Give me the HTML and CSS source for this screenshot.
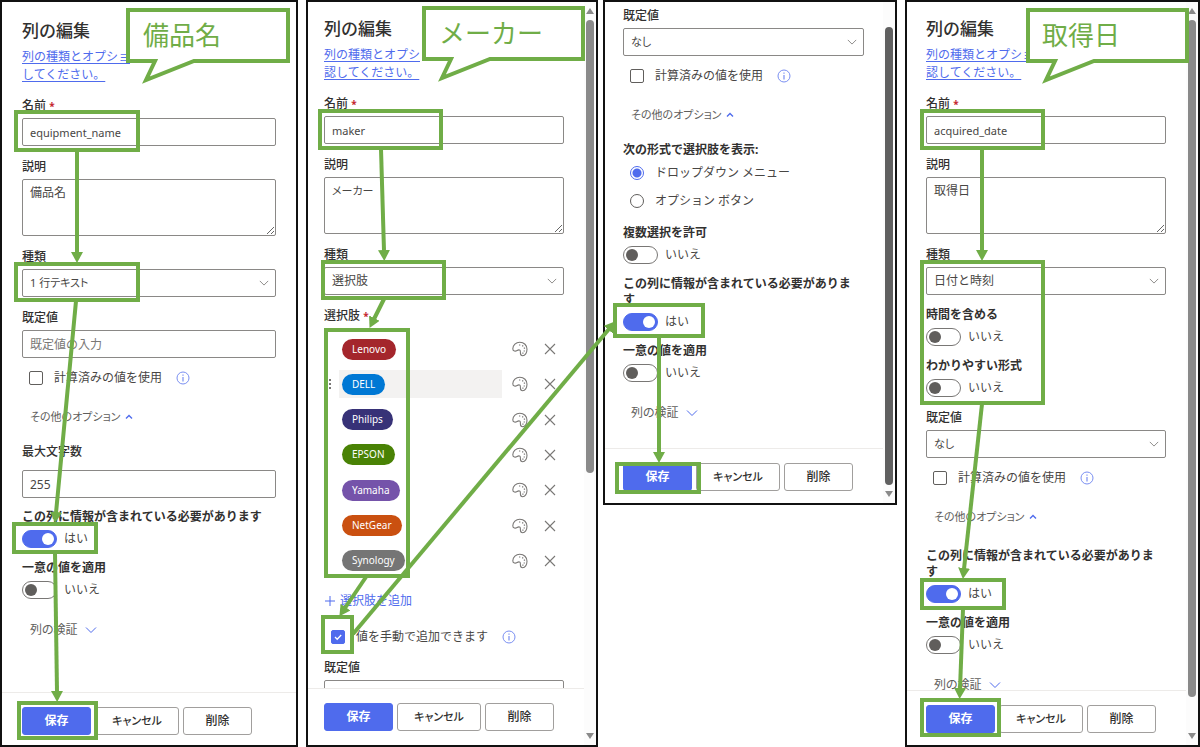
FILE: index.html
```
<!DOCTYPE html>
<html lang="ja">
<head>
<meta charset="utf-8">
<title>列の編集</title>
<link rel="stylesheet" href="styles.css">
</head>
<body>
<svg class="defs" aria-hidden="true">
  <symbol id="down" viewBox="0 0 12 12"><path d="M1 3.5 6 8.500l5-5" fill="none" stroke="currentColor"/></symbol>
  <symbol id="up" viewBox="0 0 12 12"><path d="M3 7.500 6 4.500l3 3" fill="none" stroke="currentColor" stroke-width="1.4"/></symbol>
  <symbol id="info" viewBox="0 0 14 14"><circle cx="7" cy="7" r="6" fill="none" stroke="currentColor"/><path d="M7 6v4.500M7 3.500v1.300" stroke="currentColor" stroke-width="1.200"/></symbol>
  <symbol id="close" viewBox="0 0 12 12"><path d="m1 1 10 10M11 1 1 11" stroke="currentColor" stroke-width="1.100"/></symbol>
  <symbol id="plus" viewBox="0 0 12 12"><path d="M6 1v10M1 6h10" stroke="currentColor"/></symbol>
  <symbol id="dots" viewBox="0 0 4 12"><path d="M1 1h2v2H1zM1 5h2v2H1zM1 9h2v2H1z" fill="currentColor"/></symbol>
  <symbol id="palette" viewBox="0 0 16 16"><path d="M.8 7.800C.8 4 4 1.200 7.800 1.200c4.200 0 7.200 3.100 7.200 7 0 3.700-2 6.600-4.300 6.600-1.700 0-2.300-1.200-2.300-2.700 0-1.200.2-2.200-.5-2.900-.8-.7-1.900-.3-2.800.3-1.400.9-4.300 1.200-4.300-1.700Z" fill="none" stroke="currentColor" stroke-width="1.100"/><path d="M7 4h1.300M10 4.800h1.300M11.800 7.200h1.300M11.600 10h1.300M10.300 12.200h1.200" stroke="currentColor" stroke-width="1.200"/></symbol>
</svg>

<main class="board">

<section class="panel panel-name">
  <form class="content">
    <h2>列の編集</h2>
    <a class="help" href="#">列の種類とオプショ<br>してください。</a>
    <div class="field"><label for="n1">名前 <b class="req">*</b></label><input class="box narrow" id="n1" type="text" value="equipment_name"></div>
    <div class="field"><label for="d1">説明</label><textarea class="box" id="d1">備品名</textarea></div>
    <div class="field"><label for="t1">種類</label><div class="pick"><select class="box narrow" id="t1"><option>1 行テキスト</option></select><svg><use href="#down"/></svg></div></div>
    <div class="field"><label for="v1">既定値</label><input class="box" id="v1" type="text" placeholder="既定値の入力"></div>
    <div class="check"><input type="checkbox" id="c1"><label for="c1">計算済みの値を使用</label><svg class="info"><use href="#info"/></svg></div>
    <button type="button" class="expander more narrow">その他のオプション<svg><use href="#up"/></svg></button>
    <div class="field limit"><label for="m1">最大文字数</label><input class="box" id="m1" type="text" value="255"></div>
    <div class="switch"><span class="title">この列に情報が含まれている必要があります</span><label><input type="checkbox" role="switch" checked>はい</label></div>
    <div class="switch"><span class="title">一意の値を適用</span><label><input type="checkbox" role="switch">いいえ</label></div>
    <button type="button" class="expander verify">列の検証<svg><use href="#down"/></svg></button>
  </form>
  <footer><button class="save">保存</button><button class="cancel narrow">キャンセル</button><button>削除</button></footer>
</section>

<section class="panel panel-maker">
  <form class="content">
    <h2>列の編集</h2>
    <a class="help" href="#">列の種類とオプシ<br>認してください。</a>
    <div class="field"><label for="n2">名前 <b class="req">*</b></label><input class="box narrow" id="n2" type="text" value="maker"></div>
    <div class="field"><label for="d2">説明</label><textarea class="box narrow" id="d2">メーカー</textarea></div>
    <div class="field"><label for="t2">種類</label><div class="pick"><select class="box" id="t2"><option>選択肢</option></select><svg><use href="#down"/></svg></div></div>
    <div class="field"><span class="title">選択肢 <b class="req">*</b></span></div>
    <ul class="choices">
      <li><span class="slot"><span class="chip red">Lenovo</span></span><button type="button" aria-label="色"><svg class="palette"><use href="#palette"/></svg></button><button type="button" aria-label="削除"><svg><use href="#close"/></svg></button></li>
      <li class="active"><svg class="grip"><use href="#dots"/></svg><span class="slot"><span class="chip blue">DELL</span></span><button type="button" aria-label="色"><svg class="palette"><use href="#palette"/></svg></button><button type="button" aria-label="削除"><svg><use href="#close"/></svg></button></li>
      <li><span class="slot"><span class="chip navy">Philips</span></span><button type="button" aria-label="色"><svg class="palette"><use href="#palette"/></svg></button><button type="button" aria-label="削除"><svg><use href="#close"/></svg></button></li>
      <li><span class="slot"><span class="chip green">EPSON</span></span><button type="button" aria-label="色"><svg class="palette"><use href="#palette"/></svg></button><button type="button" aria-label="削除"><svg><use href="#close"/></svg></button></li>
      <li><span class="slot"><span class="chip purple">Yamaha</span></span><button type="button" aria-label="色"><svg class="palette"><use href="#palette"/></svg></button><button type="button" aria-label="削除"><svg><use href="#close"/></svg></button></li>
      <li><span class="slot"><span class="chip orange">NetGear</span></span><button type="button" aria-label="色"><svg class="palette"><use href="#palette"/></svg></button><button type="button" aria-label="削除"><svg><use href="#close"/></svg></button></li>
      <li><span class="slot"><span class="chip gray">Synology</span></span><button type="button" aria-label="色"><svg class="palette"><use href="#palette"/></svg></button><button type="button" aria-label="削除"><svg><use href="#close"/></svg></button></li>
    </ul>
    <button type="button" class="add"><svg><use href="#plus"/></svg>選択肢を追加</button>
    <div class="check manual"><input type="checkbox" id="c2" checked><label for="c2">値を手動で追加できます</label><svg class="info"><use href="#info"/></svg></div>
    <div class="field"><label for="v2">既定値</label><div class="pick"><select class="box narrow" id="v2"><option>なし</option></select><svg><use href="#down"/></svg></div></div>
  </form>
  <footer><button class="save">保存</button><button class="cancel narrow">キャンセル</button><button>削除</button></footer>
  <div class="scroll" aria-hidden="true"><i class="arrow-up"></i><i class="thumb"></i><i class="rest"></i><i class="arrow-down"></i></div>
</section>

<section class="panel panel-more">
  <form class="content">
    <div class="field"><label for="v3">既定値</label><div class="pick"><select class="box narrow" id="v3"><option>なし</option></select><svg><use href="#down"/></svg></div></div>
    <div class="check"><input type="checkbox" id="c3"><label for="c3">計算済みの値を使用</label><svg class="info"><use href="#info"/></svg></div>
    <button type="button" class="expander more narrow">その他のオプション<svg><use href="#up"/></svg></button>
    <fieldset>
      <legend>次の形式で選択肢を表示:</legend>
      <div class="radio"><input type="radio" name="view" id="r1" checked><label for="r1">ドロップダウン メニュー</label></div>
      <div class="radio"><input type="radio" name="view" id="r2"><label for="r2">オプション ボタン</label></div>
    </fieldset>
    <div class="switch"><span class="title">複数選択を許可</span><label><input type="checkbox" role="switch">いいえ</label></div>
    <div class="switch"><span class="title">この列に情報が含まれている必要があります</span><label><input type="checkbox" role="switch" checked>はい</label></div>
    <div class="switch"><span class="title">一意の値を適用</span><label><input type="checkbox" role="switch">いいえ</label></div>
    <button type="button" class="expander verify">列の検証<svg><use href="#down"/></svg></button>
  </form>
  <footer><button class="save">保存</button><button class="cancel narrow">キャンセル</button><button>削除</button></footer>
  <div class="scroll" aria-hidden="true"><i class="thumb"></i><i class="arrow-down"></i></div>
</section>

<section class="panel panel-date">
  <form class="content">
    <h2>列の編集</h2>
    <a class="help" href="#">列の種類とオプショ<br>認してください。</a>
    <div class="field"><label for="n4">名前 <b class="req">*</b></label><input class="box narrow" id="n4" type="text" value="acquired_date"></div>
    <div class="field"><label for="d4">説明</label><textarea class="box" id="d4">取得日</textarea></div>
    <div class="field"><label for="t4">種類</label><div class="pick"><select class="box" id="t4"><option>日付と時刻</option></select><svg><use href="#down"/></svg></div></div>
    <div class="switch"><span class="title">時間を含める</span><label><input type="checkbox" role="switch">いいえ</label></div>
    <div class="switch"><span class="title">わかりやすい形式</span><label><input type="checkbox" role="switch">いいえ</label></div>
    <div class="field"><label for="v4">既定値</label><div class="pick"><select class="box narrow" id="v4"><option>なし</option></select><svg><use href="#down"/></svg></div></div>
    <div class="check"><input type="checkbox" id="c4"><label for="c4">計算済みの値を使用</label><svg class="info"><use href="#info"/></svg></div>
    <button type="button" class="expander more narrow">その他のオプション<svg><use href="#up"/></svg></button>
    <div class="switch required"><span class="title">この列に情報が含まれている必要があります</span><label><input type="checkbox" role="switch" checked>はい</label></div>
    <div class="switch"><span class="title">一意の値を適用</span><label><input type="checkbox" role="switch">いいえ</label></div>
    <button type="button" class="expander verify">列の検証<svg><use href="#down"/></svg></button>
  </form>
  <footer><button class="save">保存</button><button class="cancel narrow">キャンセル</button><button>削除</button></footer>
  <div class="scroll" aria-hidden="true"><i class="arrow-up"></i><i class="thumb"></i><i class="rest"></i><i class="arrow-down"></i></div>
</section>

<svg class="notes" viewBox="0 0 1200 747" preserveAspectRatio="none">
  <defs>
    <marker id="head" markerUnits="userSpaceOnUse" markerWidth="12" markerHeight="12" refX="1" refY="6" orient="auto"><path d="M0 0 11 6 0 12z" fill="#70ad47"/></marker>
  </defs>
  <g class="frames">
    <rect x="16" y="112" width="122" height="38"/>
    <rect x="16" y="264" width="122" height="36"/>
    <rect x="14" y="524" width="82" height="28"/>
    <rect x="19" y="703" width="77" height="35"/>
    <rect x="320" y="111" width="121" height="37"/>
    <rect x="323" y="262" width="121" height="36"/>
    <rect x="326" y="330" width="82" height="246"/>
    <rect x="323" y="617" width="29" height="35"/>
    <rect x="615" y="305" width="88" height="31"/>
    <rect x="617" y="464" width="82" height="28"/>
    <rect x="922" y="111" width="121" height="37"/>
    <rect x="922" y="262" width="121" height="141"/>
    <rect x="922" y="580" width="82" height="28"/>
    <rect x="922" y="700" width="77" height="35"/>
  </g>
  <g class="arrows">
    <path d="M77 151V253"/>
    <path d="M76 301 56 513"/>
    <path d="M55 553 57 692"/>
    <path d="M381 149 384 251"/>
    <path d="M384 299 374 319"/>
    <path d="M366 577 345 608"/>
    <path d="M353 634 609 329"/>
    <path d="M659 337V453"/>
    <path d="M982 149V251"/>
    <path d="M982 404 964 569"/>
    <path d="M963 609 960 689"/>
  </g>
  <g class="callouts">
    <path d="M128 10H288V61H194L146 80 155 61H128Z"/>
    <path d="M424 8H583V59H490L442 78 451 59H424Z"/>
    <path d="M1028 10H1187V61H1094L1046 80 1055 61H1028Z"/>
    <text x="143" y="45">備品名</text>
    <text x="439" y="43">メーカー</text>
    <text x="1042" y="45">取得日</text>
  </g>
</svg>
</main>
</body>
</html>
```
FILE: styles.css
```
* { box-sizing: border-box; }
body {
  margin: 0;
  background: #fff;
  color: #484644;
  font: 12px/16px "Noto Sans", "Noto Sans CJK JP", sans-serif;
}
button, input, select, textarea { font: inherit; color: inherit; margin: 0; }
button { background: none; border: 0; padding: 0; }
.defs { display: none; }
.board {
  position: relative;
  display: grid;
  grid-template-columns: 298fr 8px 292fr 5px 294fr 8px 295fr;
  height: 100vh;
  overflow: hidden;
}

/* Panels */
.panel {
  --left: 20px;
  --right: 20px;
  --bottom: 12px;
  display: grid;
  grid-template-rows: minmax(0, 1fr) auto;
  position: relative;
  grid-row: 1;
  min-width: 0;
  min-height: 0;
  border: 2px solid #111;
}
.panel-name { grid-column: 1; --bottom: 10px; }
.panel-maker { grid-column: 3; --left: 16px; --right: 32px; --bottom: 14px; }
.panel-more { grid-column: 5; --left: 18px; --right: 31px; align-self: start; }
.panel-date { grid-column: 7; --left: 19px; --right: 32px; }
.content {
  display: flex;
  flex-direction: column;
  overflow: hidden;
  padding: 17px var(--right) 0 var(--left);
}
.content > * { flex: none; }
.panel-name .content { padding-top: 19px; }
.panel-more .content { padding: 6px var(--right) 27px var(--left); }
h2 { margin: 0; font-size: 17px; line-height: 20px; font-weight: 500; color: #323130; }
.help { align-self: flex-start; margin-top: 7px; line-height: 18px; color: #4f6bed; text-underline-offset: 2px; }

/* Fields */
.field { margin-top: 13px; }
.help + .field { margin-top: 14px; }
.panel-more .field:first-child { margin-top: 0; }
.field > label, .title, legend {
  display: block;
  font-weight: 500;
  color: #323130;
}
.switch .title, legend { font-weight: 700; }
.panel-more .title, .panel-date .title { padding-right: 8px; }
.field > label { margin-bottom: 4px; }
.req { color: #c4262e; font-size: 10px; }
.box {
  display: block;
  width: 100%;
  height: 28px;
  padding: 0 7px;
  border: 1px solid #8a8886;
  border-radius: 2px;
  background: #fff;
  appearance: none;
}
.box::placeholder { color: #797775; opacity: 1; }
textarea.box { height: 57px; padding-top: 5px; }
.narrow { font-size: 11px; font-feature-settings: "palt"; }
.pick { position: relative; }
.pick svg { position: absolute; right: 7px; top: 9px; width: 10px; height: 10px; color: #797775; }
.limit { margin-top: 19px; }
.limit > label { margin-bottom: 10px; }
.limit + .switch { margin-top: 11px; }

/* Check boxes and radios */
.check { display: flex; align-items: center; height: 18px; margin-top: 11px; padding-left: 7px; }
.check input, .radio input {
  appearance: none;
  width: 14px;
  height: 14px;
  margin-right: 11px;
  border: 1px solid #605e5c;
  border-radius: 2px;
}
.check input:checked {
  border-color: #4f6bed;
  background: #4f6bed url("data:image/svg+xml,%3Csvg xmlns='http://www.w3.org/2000/svg' viewBox='0 0 12 12'%3E%3Cpath d='M3 6l2.200 2.200L9.200 4' fill='none' stroke='white' stroke-width='1.300'/%3E%3C/svg%3E");
}
.info { width: 14px; height: 14px; margin-left: 14px; color: #7a8ff2; }
.manual { margin-top: 19px; }
.manual + .field { margin-top: 14px; }
fieldset { margin: 19px 0 3px; padding: 0; border: 0; }
legend { padding: 0; }
.radio { display: flex; align-items: center; height: 18px; margin-top: 10px; padding-left: 7px; }
legend + .radio { margin-top: 6px; }
.radio input { border-radius: 50%; }
.radio input:checked {
  border-color: #4f6bed;
  background: radial-gradient(circle, #4f6bed 4px, transparent 5px);
}

/* Switches */
.switch { margin-top: 12px; }
.switch label { display: flex; align-items: center; gap: 7px; margin-top: 5px; height: 18px; }
.switch input {
  appearance: none;
  display: flex;
  align-items: center;
  width: 35px;
  height: 18px;
  padding: 0 2px;
  border: 1px solid #797775;
  border-radius: 9px;
}
.switch input::before { content: ""; width: 12px; height: 12px; border-radius: 50%; background: #605e5c; }
.switch input:checked { justify-content: flex-end; border-color: #4f6bed; background: #4f6bed; }
.switch input:checked::before { background: #fff; }
.required { margin-top: 23px; }

.expander { display: flex; align-items: center; align-self: flex-start; height: 16px; padding-left: 8px; color: #605e5c; }
.expander svg { width: 12px; height: 12px; color: #4f6bed; }
.more { margin-top: 22px; gap: 2px; }
.verify { margin-top: 23px; gap: 7px; font-feature-settings: "palt"; }

/* Choice list */
.choices {
  display: grid;
  align-content: space-between;
  height: 240px;
  margin: 11px 0 0;
  padding: 0;
  list-style: none;
}
.choices li { position: relative; display: flex; align-items: center; height: 28px; padding-left: 15px; }
.slot { display: flex; align-items: center; flex: 1; height: 28px; padding-left: 3px; margin-right: 10px; }
.active .slot { background: #f3f2f1; }
.grip { position: absolute; left: 4px; top: 8px; width: 4px; height: 12px; color: #797775; }
.chip { height: 21px; padding: 0 10px; border-radius: 11px; color: #fff; font: 10px/21px "Noto Sans", sans-serif; }
.red { background: #a4262c; }
.blue { background: #0078d4; }
.navy { background: #373277; }
.green { background: #498205; }
.purple { background: #7553aa; }
.orange { background: #ca5010; }
.gray { background: #757575; }
.choices button { display: flex; color: #797775; }
.choices button svg { width: 12px; height: 12px; }
.choices button .palette { width: 16px; height: 16px; }
.choices button + button { margin: 0 8px 0 16px; }
.add { display: flex; align-items: center; gap: 4px; margin-top: 18px; align-self: flex-start; height: 16px; color: #4f6bed; }
.add svg { width: 12px; height: 12px; }

/* Footer */
footer { display: flex; gap: 4px; padding: 14px var(--left) var(--bottom); border-top: 1px solid #edebe9; }
footer button { width: 69px; height: 28px; border: 1px solid #a19f9d; border-radius: 3px; color: #323130; font-weight: 500; }
footer .cancel { width: 84px; }
footer .save { border-color: #4f6bed; background: #4f6bed; color: #fff; font-weight: 700; }

/* Scroll bars */
.scroll {
  position: absolute;
  inset: 0 0 0 auto;
  display: flex;
  flex-direction: column;
  align-items: center;
  width: 12px;
  padding: 6px 0;
  background: #fcfcfc;
}
.thumb { flex: 454; width: 8px; margin-top: 6px; border-radius: 4px; background: #8a8a8a; }
.rest { flex: 255; }
.panel-more .thumb { margin-top: 19px; background: #606060; }
.panel-date .thumb { flex: 680; }
.panel-date .rest { flex: 30; }
.arrow-up, .arrow-down { border: 4px solid transparent; }
.arrow-up { border-top: 0; border-bottom: 6px solid #8a8a8a; }
.arrow-down { margin-top: 6px; border-bottom: 0; border-top: 6px solid #8a8a8a; }

/* Annotations */
.notes { position: absolute; inset: 0; width: 100%; height: 100%; pointer-events: none; }
.frames rect, .arrows path { fill: none; stroke: #70ad47; stroke-width: 4; }
.arrows path { marker-end: url(#head); }
.callouts path { fill: #fff; stroke: #70ad47; stroke-width: 4; }
.callouts text { fill: #70ad47; font: 26px "Noto Sans CJK JP", sans-serif; }
```
